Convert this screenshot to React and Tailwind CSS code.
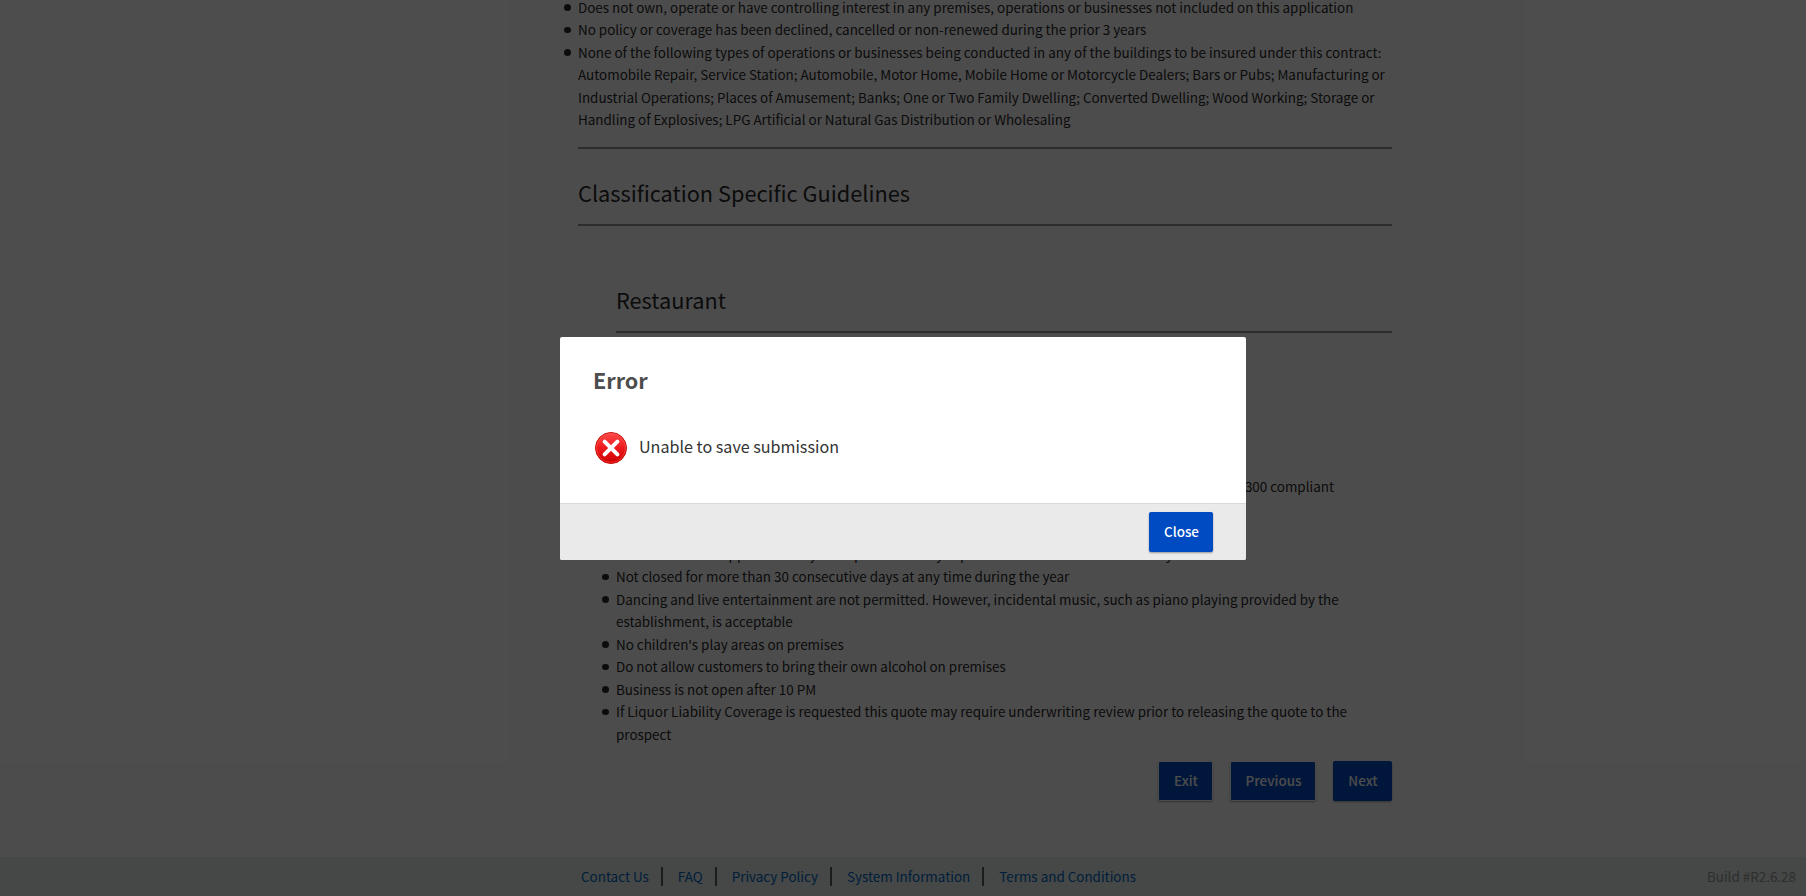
const eligibility = [
  ["Does not own, operate or have controlling interest in any premises, operations or businesses not included on this application"],
  ["No policy or coverage has been declined, cancelled or non-renewed during the prior 3 years"],
  [
    "None of the following types of operations or businesses being conducted in any of the buildings to be insured under this contract:",
    "Automobile Repair, Service Station; Automobile, Motor Home, Mobile Home or Motorcycle Dealers; Bars or Pubs; Manufacturing or",
    "Industrial Operations; Places of Amusement; Banks; One or Two Family Dwelling; Converted Dwelling; Wood Working; Storage or",
    "Handling of Explosives; LPG Artificial or Natural Gas Distribution or Wholesaling",
  ],
];

const restaurant = [
  ["Not closed for more than 30 consecutive days at any time during the year"],
  [
    "Dancing and live entertainment are not permitted. However, incidental music, such as piano playing provided by the",
    "establishment, is acceptable",
  ],
  ["No children's play areas on premises"],
  ["Do not allow customers to bring their own alcohol on premises"],
  ["Business is not open after 10 PM"],
  [
    "If Liquor Liability Coverage is requested this quote may require underwriting review prior to releasing the quote to the",
    "prospect",
  ],
];

const links = ["Contact Us", "FAQ", "Privacy Policy", "System Information", "Terms and Conditions"];

function Item({ children }) {
  return (
    <li className="flex">
      <span className="-ml-[14px] mt-[8.8px] mr-[7.5px] size-[6.5px] shrink-0 rounded-full bg-[#2b2b2b]" />
      <div className="whitespace-nowrap">{children}</div>
    </li>
  );
}

function List({ items }) {
  return items.map((lines) => (
    <Item key={lines[0]}>
      {lines.map((line) => (
        <p key={line}>{line}</p>
      ))}
    </Item>
  ));
}

function Heading({ children }) {
  return (
    <h2 className="border-b-2 border-[#979797] pb-[15px] text-[21.75px] leading-[33px] text-[#2b2b2b]">{children}</h2>
  );
}

function Button({ children, className }) {
  return (
    <button className={"flex h-10 items-center justify-center rounded-[2px] bg-[#004bc1] pb-0.5 pl-px font-medium text-white shadow-[0_1px_2px_rgba(0,0,0,0.35)] " + className}>
      {children}
    </button>
  );
}

function ErrorIcon() {
  return (
    <svg className="size-8 shrink-0" viewBox="0 0 32 32">
      <defs>
        <linearGradient id="disc" x1="0" y1="0" x2="0" y2="1">
          <stop offset="0" stopColor="#ff4a4a" />
          <stop offset="0.5" stopColor="#ec1a1c" />
          <stop offset="1" stopColor="#cc0000" />
        </linearGradient>
        <linearGradient id="ring" x1="0" y1="0" x2="0" y2="1">
          <stop offset="0" stopColor="#f9564c" />
          <stop offset="1" stopColor="#ea3028" />
        </linearGradient>
      </defs>
      <circle cx="16" cy="16" r="15.5" fill="url(#disc)" stroke="#c8100c" strokeWidth="1" />
      <circle cx="16" cy="16" r="14.4" fill="none" stroke="url(#ring)" strokeWidth="0.9" />
      <path d="M9.6 9.6 L22.4 22.4 M22.4 9.6 L9.6 22.4" stroke="#fff" strokeWidth="4" strokeLinecap="round" />
    </svg>
  );
}

export default function App() {
  return (
    <div className="relative h-[896px] w-[1806px] overflow-hidden bg-white font-['Noto_Sans_CJK_SC','Source_Sans_Pro',sans-serif] text-[13.43px] leading-[22.5px] text-[#2b2b2b]">
      <div className="flex h-full flex-col">
        <main className="-mt-[4.5px] ml-[578px] w-[814px]">
          <ul>
            <List items={eligibility} />
          </ul>
          <div className="mt-[16.5px] h-0.5 bg-[#979797]" />
          <div className="pt-[27px]">
            <Heading>Classification Specific Guidelines</Heading>
          </div>
          <section className="ml-[38px] pt-[57px]">
            <Heading>Restaurant</Heading>
            <ul className="mt-[142px]">
              <Item>
                <p className="w-[718px] text-right">300 compliant</p>
              </Item>
              <li className="h-[45px]" />
              <Item>
                <p className="flex">
                  <span className="w-[105px]">Food service is</span>
                  <span className="w-[91px]">applicable only</span>
                  <span className="w-[42px]">to the</span>
                  <span className="w-[74px]">premises</span>
                  <span className="w-[32px]">by</span>
                  <span className="w-[190px]">persons on hire</span>
                  <span>any</span>
                </p>
              </Item>
              <List items={restaurant} />
            </ul>
          </section>
          <div className="mt-4 flex justify-end gap-[17px]">
            <Button className="w-[55px] border border-white">Exit</Button>
            <Button className="w-[86px] border border-white">Previous</Button>
            <Button className="w-[59px]">Next</Button>
          </div>
        </main>
        <footer className="mt-14 flex flex-1 items-start bg-[#e6f0eb] pt-2">
          <nav className="ml-[581px] flex items-center text-[#0067c5]">
            {links.map((label, i) => (
              <span key={label} className="flex items-center">
                {i > 0 && <span className="mr-[15px] ml-3 h-[19px] w-0.5 bg-[#5c5e66]" />}
                <a>{label}</a>
              </span>
            ))}
          </nav>
          <span className="mr-[10px] ml-auto text-[#999]">Build #R2.6.28</span>
        </footer>
      </div>

      <div className="absolute inset-0 flex items-start justify-center bg-black/70 pt-[337px]">
        <div role="dialog" className="flex h-[223px] w-[686px] flex-col overflow-hidden rounded-[2px] bg-white">
          <div className="flex-1 px-[34px] pt-[26px]">
            <h1 className="-ml-px text-[21.6px] leading-[34px] font-bold text-[#4d4d4d]">Error</h1>
            <div className="mt-[35px] ml-px flex items-center text-[16.13px] text-[#333]">
              <ErrorIcon />
              <p className="ml-3 pb-[3px]">Unable to save submission</p>
            </div>
          </div>
          <div className="flex h-[57px] justify-end border-t border-[#d9d9d9] bg-[#eaeaea] pt-2 pr-[33px]">
            <Button className="w-16">Close</Button>
          </div>
        </div>
      </div>
    </div>
  );
}
